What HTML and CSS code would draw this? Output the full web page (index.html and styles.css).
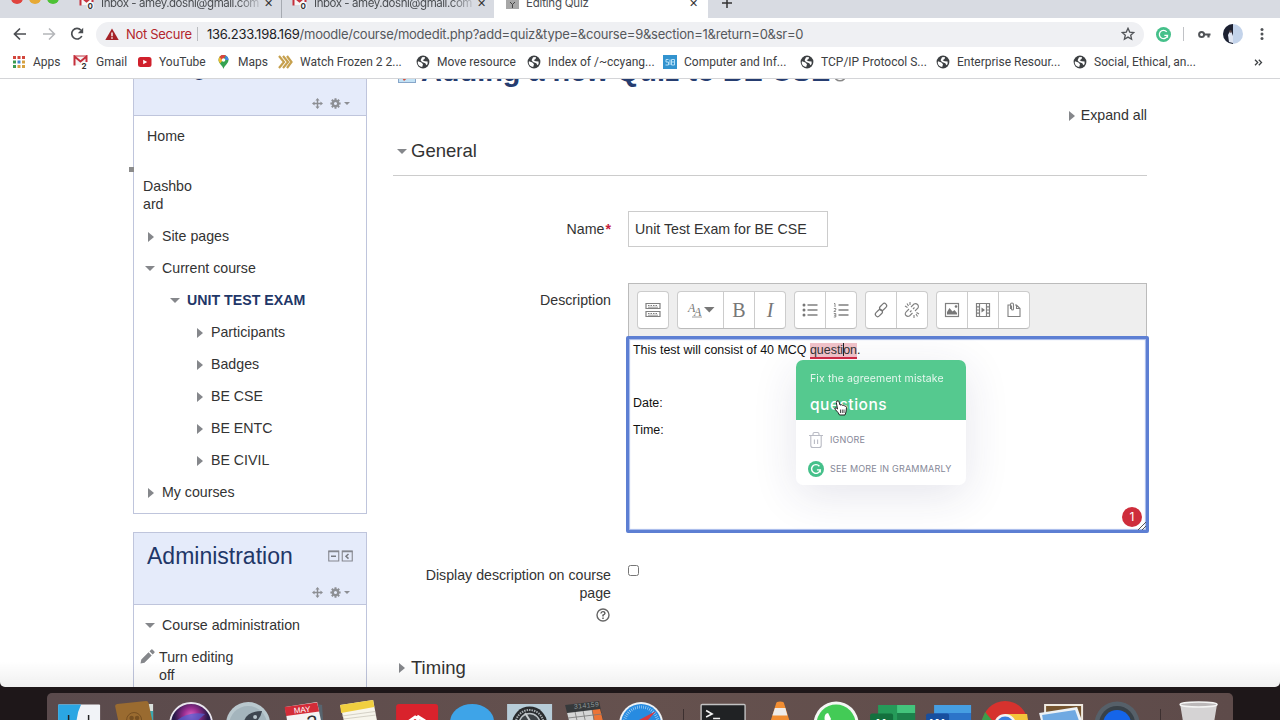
FILE: index.html
```html
<!DOCTYPE html>
<html lang="en">
<head>
  <meta charset="UTF-8">
  <title>Editing Quiz</title>
  <link rel="stylesheet" href="styles.css">
</head>
<body>
  <svg width="0" height="0" class="defs">
    <symbol id="globe" viewBox="0 0 14 14">
      <circle cx="7" cy="7" r="6.4" fill="#3d4043"/>
      <path d="M2 6.2 L5.4 7.4 L7 9.2 L6.2 12 Q2.4 11.4 1.7 8Z M6 2.2 L8.7 2 Q9.5 3.5 8.2 4.2 L6.6 5.2 L8.6 6.3 L11.6 6.4 Q12.2 8.5 10.4 10.3 L9.3 8.2 L6 6.9 L4.6 5.2Z" fill="#fff"/>
    </symbol>
    <symbol id="gmail" viewBox="0 0 16 14">
      <path d="M1 1h13v9H1z" fill="#f5f5f5"/>
      <path d="M1.500 10.500V1.500L7.500 6.500L13.500 1.500V7" fill="none" stroke="#c5303c" stroke-width="2"/>
      <path d="M1 1h13" stroke="#c5303c"/>
    </symbol>
    <symbol id="grammarly" viewBox="0 0 16 16">
      <circle cx="8" cy="8" r="8" fill="#45c08a"/>
      <path d="M11.400 5.200A4.400 4.400 0 1 0 12.300 8.900H8.900M12.200 8.800V11.500" fill="none" stroke="#fff" stroke-width="1.400"/>
    </symbol>
    <symbol id="move" viewBox="0 0 12 12">
      <path d="M6 0l2.300 2.800H6.800v2.400h2.400V3.700L12 6L9.200 8.300V6.800H6.800v2.400h1.500L6 12L3.700 9.200h1.500V6.800H2.800v1.500L0 6l2.800-2.300v1.500h2.400V2.800H3.700z" fill="#8d8f94"/>
    </symbol>
    <symbol id="gear" viewBox="0 0 12 12">
      <circle cx="6" cy="6" r="3" fill="none" stroke="#8d8f94" stroke-width="2.600"/>
      <path d="M6 .4v2M6 9.600v2M.4 6h2M9.600 6h2M2 2l1.500 1.500M8.500 8.500L10 10M2 10l1.500-1.500M8.500 3.500L10 2" stroke="#8d8f94" stroke-width="2.200"/>
    </symbol>
  </svg>

  <div class="browser">
    <div class="tabs">
      <div class="lights"><i class="red"></i><i class="yellow"></i><i class="green"></i></div>
      <div class="tab first">
        <svg width="16" height="14"><use href="#gmail"/><text x="8.500" y="13.500" class="count">0</text></svg>
        <span>Inbox - amey.doshi@gmail.com</span><b>✕</b>
      </div>
      <div class="tab second">
        <svg width="16" height="14"><use href="#gmail"/><text x="8.500" y="13.500" class="count">0</text></svg>
        <span>Inbox - amey.doshi@gmail.com</span><b>✕</b>
      </div>
      <div class="tab active">
        <svg width="14" height="14"><rect width="13" height="14" fill="#a7a7a7"/><path d="M4 7l2.500 2.500L9 7M6.500 9.500V13" stroke="#444" fill="none"/></svg>
        <span>Editing Quiz</span><b>✕</b>
      </div>
      <div class="new-tab"><svg width="12" height="12"><path d="M6 1v10M1 6h10" stroke="#333" stroke-width="1.500"/></svg></div>
    </div>

    <div class="toolbar">
      <svg class="back" width="14" height="14"><path d="M13 7H2M7 1.500L1.500 7L7 12.500" fill="none" stroke="#4b4e52" stroke-width="1.700"/></svg>
      <svg class="forward" width="14" height="14"><path d="M1 7h11M7 1.500L12.500 7L7 12.500" fill="none" stroke="#b4b6b9" stroke-width="1.500"/></svg>
      <svg class="reload" width="14" height="14"><path d="M11.800 9A5.300 5.300 0 1 1 11 3.200" fill="none" stroke="#4b4e52" stroke-width="1.700"/><path d="M13.200 .8v5.400H7.800z" fill="#4b4e52"/></svg>
      <div class="address">
        <svg width="14" height="13"><path d="M7 .5L13.700 12H.3z" fill="#a52227"/><path d="M7 4.500v3.800M7 9.200v1.500" stroke="#fff" stroke-width="1.400"/></svg>
        <span class="warn">Not Secure</span>
        <span class="url"><em>136.233.198.169</em>/moodle/course/modedit.php?add=quiz&amp;type=&amp;course=9&amp;section=1&amp;return=0&amp;sr=0</span>
        <svg class="star" width="14" height="14"><path d="M7 1.300l1.700 3.800 4.100.4-3.100 2.700.9 4L7 10.100l-3.600 2.100.9-4L1.200 5.500l4.100-.4z" fill="none" stroke="#505357" stroke-width="1.300"/></svg>
      </div>
      <svg class="ext" width="15" height="15"><use href="#grammarly"/></svg>
      <i class="divider"></i>
      <svg class="key" width="13" height="9"><circle cx="3.600" cy="4.500" r="2.500" fill="none" stroke="#505357" stroke-width="2"/><path d="M6 4.500h6.500M10.500 4.500v3" stroke="#505357" stroke-width="2.200"/></svg>
      <svg class="avatar" width="20" height="20"><circle cx="10" cy="10" r="10" fill="#c3d3ea"/><path d="M10 0A10 10 0 0 0 10 20z" fill="#1c2030"/><path d="M5 11l1.500-3h2l1.500 4v7l-4-1z" fill="#dfe5f2"/><circle cx="7.500" cy="7.500" r="1.300" fill="#604c4b"/></svg>
      <svg class="dots" width="4" height="14"><circle cx="2" cy="2.500" r="1.500"/><circle cx="2" cy="7" r="1.500"/><circle cx="2" cy="11.500" r="1.500"/></svg>
    </div>

    <div class="bookmarks">
      <div><svg width="14" height="14"><path d="M1 2.500h3M5.500 2.500h3M10 2.500h3" stroke="#d2453c" stroke-width="3"/><path d="M1 7h3M1 11.500h3" stroke="#3c9b52" stroke-width="3"/><path d="M5.500 7h3" stroke="#4285d0" stroke-width="3"/><path d="M10 7h3M5.500 11.500h3M10 11.500h3" stroke="#d6a140" stroke-width="3"/></svg><span>Apps</span></div>
      <div><svg width="16" height="14"><use href="#gmail"/><text x="8.500" y="13.500" class="count">2</text></svg><span>Gmail</span></div>
      <div><svg width="14" height="12"><rect y="1" width="13.500" height="10" rx="2.500" fill="#d0202c"/><path d="M5.200 3.700v4.600L9.200 6z" fill="#fff"/></svg><span>YouTube</span></div>
      <div class="maps"><svg width="11" height="14"><path d="M5.500 14C5 11 .5 8.500 .5 5a5 5 0 0 1 10 0C10.500 8.500 6 11 5.500 14z" fill="#35a351"/><path d="M.6 5.800A5 5 0 0 1 2 1.500L5 5 2 8.500z" fill="#f2b92e"/><path d="M1.500 1.800A5 5 0 0 1 8 .7L4 5z" fill="#d9453d"/><path d="M7.500 .5a5 5 0 0 1 3 4.500L7 5z" fill="#4584e4"/><circle cx="5.500" cy="5" r="1.800" fill="#fff"/></svg><span>Maps</span></div>
      <div><svg width="15" height="14"><path d="M1 1l5 6-5 6M5 1l5 6-5 6M9 1l4.500 6L9 13" fill="none" stroke="#c6a04d" stroke-width="2.200"/></svg><span>Watch Frozen 2 2...</span></div>
      <div><svg width="14" height="14"><use href="#globe"/></svg><span>Move resource</span></div>
      <div><svg width="14" height="14"><use href="#globe"/></svg><span>Index of /~ccyang...</span></div>
      <div><svg width="14" height="14"><rect width="14" height="14" fill="#3293cf"/><path d="M5.500 4.500H3v2.500h2.500V10H2.500M7 4.500v5.500M8.500 4.500h3V10h-3zM8.500 7h3" fill="none" stroke="#b5e0f8"/></svg><span>Computer and Inf...</span></div>
      <div><svg width="14" height="14"><use href="#globe"/></svg><span>TCP/IP Protocol S...</span></div>
      <div><svg width="14" height="14"><use href="#globe"/></svg><span>Enterprise Resour...</span></div>
      <div><svg width="14" height="14"><use href="#globe"/></svg><span>Social, Ethical, an...</span></div>
      <svg class="more" width="9" height="7"><path d="M1 .8l2.700 2.700L1 6.200M4.800 .8l2.700 2.700-2.700 2.700" fill="none" stroke="#3d4043" stroke-width="1.300"/></svg>
    </div>

    <div class="page">
      <aside>
        <section class="block">
          <header>
            <h3>Navigation</h3>
            <p class="actions"><svg width="11" height="11"><use href="#move"/></svg><svg width="11" height="11"><use href="#gear"/></svg><i class="caret"></i></p>
          </header>
          <ul class="tree">
            <li class="home">Home</li>
            <li class="dash">Dashbo<br>ard</li>
            <li class="closed">Site pages</li>
            <li class="open">Current course</li>
            <li class="open l2 current">UNIT TEST EXAM</li>
            <li class="closed l3">Participants</li>
            <li class="closed l3">Badges</li>
            <li class="closed l3">BE CSE</li>
            <li class="closed l3">BE ENTC</li>
            <li class="closed l3">BE CIVIL</li>
            <li class="closed">My courses</li>
          </ul>
        </section>
        <section class="block">
          <header>
            <div class="title-row">
              <h3>Administration</h3>
              <svg width="25" height="12"><path d="M.75 1h10v10h-10zM14.250 1h10v10h-10z" fill="none" stroke="#85888f" stroke-width="1.100"/><path d="M.5 1.500h10.500M14 1.500h10.500" stroke="#85888f" stroke-width="1.500"/><path d="M3 6.300h5M20.500 4l-2.500 2.300 2.500 2.300" fill="none" stroke="#777a80" stroke-width="1.500"/></svg>
            </div>
            <p class="actions"><svg width="11" height="11"><use href="#move"/></svg><svg width="11" height="11"><use href="#gear"/></svg><i class="caret"></i></p>
          </header>
          <ul class="tree">
            <li class="open">Course administration</li>
            <li class="edit"><svg width="15" height="15"><path d="M.5 14.500l.8-4L8.500 3.300l3.200 3.200-7.200 7.200zM9.500 2.300L11.300.6q.7-.5 1.400.1l1.700 1.700q.6.700 0 1.400L12.700 5.500z" fill="#85878b"/></svg><span>Turn editing<br>off</span></li>
          </ul>
        </section>
      </aside>

      <main>
        <h2><svg width="18" height="24"><rect x=".5" y=".5" width="17" height="23" fill="#c3e2f5" stroke="#87a6c9"/><path d="M1 14l5 8 10-9-3-3H3z" fill="#d34f3b"/></svg><span>Adding a new Quiz to BE CSE</span><svg class="help" width="14" height="14"><circle cx="7" cy="7" r="5.800" fill="none" stroke="#888" stroke-width="1.500"/></svg></h2>
        <a class="expand">Expand all</a>
        <h4 class="legend open">General</h4>
        <form>
          <div class="row name">
            <label>Name<b>*</b></label>
            <input type="text" value="Unit Test Exam for BE CSE">
          </div>
          <div class="row desc">
            <label>Description</label>
            <div class="editor">
              <div class="buttons">
                <div class="group"><span><svg width="16" height="16"><path d="M1 1.500h14v5H1zM1 9.500h14v5H1z" fill="none" stroke="#808080" stroke-width="1.200"/><path d="M3 3.500h10M3 11.500h10" stroke="#808080" stroke-dasharray="1.500 1"/><path d="M3 5.200h10M3 13.200h10" stroke="#808080" stroke-width=".8"/></svg></span></div>
                <div class="group"><span class="wide"><svg width="28" height="18"><text x="1" y="11" class="aa">A</text><text x="7" y="15" class="aa">A</text><path d="M5 16h10" stroke="#808080" stroke-width=".8"/><path d="M17 6h10.500l-5.200 5.500z" fill="#777"/></svg></span><span class="bold">B</span><span class="italic">I</span></div>
                <div class="group"><span><svg width="16" height="16"><path d="M5.500 3h10M5.500 8h10M5.500 13h10" stroke="#808080" stroke-width="1.300"/><circle cx="2" cy="3" r="1.500" fill="#777"/><circle cx="2" cy="8" r="1.500" fill="#777"/><circle cx="2" cy="13" r="1.500" fill="#777"/></svg></span><span><svg width="16" height="16"><path d="M5.500 3h10M5.500 8h10M5.500 13h10" stroke="#808080" stroke-width="1.300"/><path d="M1 1.500h1V5M.8 6.500h2v1.500l-2 1.500h2M.8 11.500h2V15h-2M1 13.200h1.800" fill="none" stroke="#808080" stroke-width=".9"/></svg></span></div>
                <div class="group"><span><svg width="16" height="16"><g fill="none" stroke="#777" stroke-width="1.200"><rect x="-1" y="-2.300" width="8" height="4.600" rx="2.300" transform="translate(8 7) rotate(-45)"/><rect x="-7" y="-2.300" width="8" height="4.600" rx="2.300" transform="translate(8 9) rotate(-45)"/></g></svg></span><span><svg width="16" height="16"><path d="M7 5l3-3q2-1 3.500.5T14 6l-3 3M5 7l-3 3q-1.500 2 0 3.500t3.500.5l3-3M6 10l1.500-1.500M9 7l1.500-1.500M1 4l2.500 1.500M3 1.500l1.500 2.500M6 0v3M15 12l-2.500-1.500M13.500 14.500L12 12M10 16v-3" fill="none" stroke="#808080" stroke-width="1.100"/></svg></span></div>
                <div class="group"><span><svg width="16" height="16"><rect x="1.500" y="1.500" width="13" height="13" fill="none" stroke="#808080" stroke-width="1.200"/><path d="M3 12.500V10l2.500-4 3 3.500L10.500 8l2.500 3v1.500z" fill="#777"/><circle cx="12" cy="4.500" r="1.300" fill="#777"/></svg></span><span><svg width="16" height="16"><path d="M1.500 1.500h13v13h-13zM4.500 1.500v13M11.500 1.500v13M1.500 4.800h3M1.500 8h3M1.500 11.200h3M11.500 4.800h3M11.500 8h3M11.500 11.200h3" fill="none" stroke="#808080" stroke-width="1.200"/><path d="M6.500 5.500v5L10 8z" fill="#777"/></svg></span><span><svg width="16" height="16"><path d="M4 3H2v11.500h12V6.500L10.500 3H9M10.500 3v3.500H14M4.500 7V2.500q0-1.500 1.500-1.500t1.500 1.500V7q0 1-1 1t-1-1V3.500" fill="none" stroke="#808080" stroke-width="1.100"/></svg></span></div>
              </div>
              <div class="content">
                <p>This test will consist of 40 MCQ <mark>questi<i class="text-caret"></i>on</mark>.</p>
                <p>&nbsp;</p>
                <p>Date:</p>
                <p>Time:</p>
                <span class="errors">1</span>
                <svg class="resize" width="8" height="8"><path d="M0 8L8 0M4 8l4-4" stroke="#555"/></svg>
              </div>
              <div class="popup">
                <div class="fix"><small>Fix the agreement mistake</small><strong>questions</strong></div>
                <div class="option"><svg width="16" height="18"><path d="M1 4.500h14M5 4.500V3q0-1.500 1.500-1.500h3Q11 1.500 11 3v1.500M2.800 5v9.500q0 2 2 2h6.400q2 0 2-2V5M6.400 8.500v4.500M9.600 8.500v4.500" fill="none" stroke="#b9bbc4" stroke-width="1.100"/></svg><span>IGNORE</span></div>
                <div class="option"><svg width="16" height="16"><use href="#grammarly"/></svg><span>SEE MORE IN GRAMMARLY</span></div>
                <svg class="hand" width="13" height="16" viewBox="0 0 13 16"><path d="M3 1q1.500-.8 2 .8L6 5l1.500-.3.8.6 1.500-.1.700.8 1.300.2.700 1.300L12 12l-1 3H5.500L4 12.500 .8 9q-.2-1.500 1.500-1l1.200 1L2.300 2.500z" fill="#fff" stroke="#222"/><path d="M6.500 9.500v3.500M8.300 9.500v3.500M10 9.500v3.500" stroke="#222" stroke-width=".8"/></svg>
              </div>
            </div>
          </div>
          <div class="row show">
            <label>Display description on course page<br><svg width="14" height="14"><circle cx="7" cy="7" r="6" fill="none" stroke="#666" stroke-width="1.400"/><path d="M4.900 5.500q.2-1.900 2.100-1.900t2 1.600Q9 6.200 7 7.200v1.200M7 9.400v1.600" fill="none" stroke="#555" stroke-width="1.400"/></svg></label>
            <input type="checkbox">
          </div>
        </form>
        <h4 class="legend closed">Timing</h4>
      </main>
    </div>
  </div>

  <div class="dock">
    <svg viewBox="0 0 56 27"><rect x="7" y="11.500" width="42" height="20" rx="1" fill="#f1f3f7"/><path d="M7 11.500h23q-4 8-4.500 16H7z" fill="#2ba6e3"/><path d="M17.500 22v6M37.500 22v6" stroke="#222" stroke-width="1.500"/></svg>
    <svg viewBox="0 0 56 27"><path d="M36 11h10v17H36z" fill="#d9e0dc"/><path d="M42 18h4v10h-4z" fill="#3ca9b2"/><path d="M8 13q0-1.500 2-2l29-3q2 0 2.500 2L45 27H11z" fill="#9a6b30"/><circle cx="27" cy="27" r="7.500" fill="none" stroke="#775022"/><circle cx="24.500" cy="25" r="2.200" fill="#775022"/><circle cx="30" cy="25" r="2.200" fill="#775022"/></svg>
    <svg viewBox="0 0 56 27"><defs><radialGradient id="siri" cx=".5" cy=".3"><stop offset="0" stop-color="#e264c4"/><stop offset=".35" stop-color="#9a2e91"/><stop offset=".8" stop-color="#28184a"/></radialGradient></defs><circle cx="28" cy="31" r="21" fill="url(#siri)" stroke="#e9e6ee" stroke-width="1.800"/><path d="M13 28q12-10 29-7l-8 7z" fill="#4b62d1" opacity=".7"/></svg>
    <svg viewBox="0 0 56 27"><circle cx="28" cy="31" r="22" fill="#b9c8ce"/><circle cx="28" cy="32" r="19" fill="#a4b5bd"/><path d="M24 28q3-10 18-10q-1 5-5 10z" fill="#3d4650"/><circle cx="35" cy="24" r="2" fill="#b8c5cc"/></svg>
    <svg viewBox="0 0 56 27"><path d="M40 11l6 1 1 16h-5z" fill="#58656f"/><path d="M9 14l32-5 4 19H11z" fill="#f4f3f3"/><path d="M8.500 14L41 9.500l2 9L10 23z" fill="#d32c38"/><text x="18" y="20.500" class="may" transform="rotate(-7 19 20)">MAY</text><text x="31" y="37" class="day" transform="rotate(-7 31 34)">2</text></svg>
    <svg viewBox="0 0 56 27"><path d="M8 12l33-5 4 21H12z" fill="#f7f5ec"/><path d="M8 12l33-5 1.200 7L9 20z" fill="#f0cf40"/><path d="M10 23l33-4.500M11 26l33-4" stroke="#cbc8bd" stroke-width=".8"/></svg>
    <svg viewBox="0 0 56 27"><rect x="8" y="11" width="42" height="20" rx="3" fill="#d9222c"/><path d="M20 29l7-5 4 3M29 23l8 5" fill="none" stroke="#fff" stroke-width="3"/></svg>
    <svg viewBox="0 0 56 27"><ellipse cx="28" cy="29" rx="22" ry="18" fill="#3ea4e8"/></svg>
    <svg viewBox="0 0 56 27"><rect x="6" y="11" width="45" height="20" fill="#b7ccd8"/><circle cx="28.500" cy="31" r="17.500" fill="#282b2e"/><circle cx="28.500" cy="31" r="14" fill="none" stroke="#a7adb1" stroke-width="2" stroke-dasharray="1.500 1"/><circle cx="28.500" cy="31" r="10.500" fill="#3e4347" stroke="#bbc1c5" stroke-width="1.500"/><path d="M24 20l5 8" stroke="#c6cbce" stroke-width="2"/></svg>
    <svg viewBox="0 0 56 27"><path d="M8 12l34-4 4 20H12z" fill="#36393b"/><text x="17" y="16" class="calc" transform="rotate(-6 17 16)">314159</text><path d="M10 20l25-3 2 11H12z" fill="#d5d6d6"/><path d="M35 17l8-1 3 12h-9z" fill="#eb7437"/><path d="M18 19l2 9M26 18l2 9M11 25l34-4M35 17l2 10" stroke="#777" stroke-width=".8"/></svg>
    <svg viewBox="0 0 56 27"><circle cx="28" cy="31" r="22" fill="#eef2f5"/><circle cx="28" cy="31" r="20" fill="#278be1"/><circle cx="28" cy="31" r="17" fill="none" stroke="#b9dcf8" stroke-width="3" stroke-dasharray=".6 1.500"/><path d="M43 18L24 28h10z" fill="#d73b42"/></svg>
    <i></i>
    <svg viewBox="0 0 56 27"><rect x="5" y="11.500" width="44" height="20" rx="1" fill="#202224" stroke="#c2c2c2" stroke-width="1.400"/><path d="M10 17.500l6 3.500-6 3M17 25.500h7" fill="none" stroke="#f3f3f3" stroke-width="1.600"/></svg>
    <svg viewBox="0 0 56 27"><path d="M24 10.500q0-2 4-2t4 2L37.500 28h-19z" fill="#f18e33"/><path d="M22.800 15h10.500l2 7.500h-15z" fill="#eeecea"/></svg>
    <svg viewBox="0 0 56 27"><circle cx="28" cy="31" r="22.500" fill="#f4f6f4"/><circle cx="28" cy="31" r="19.500" fill="#43cb56"/><path d="M17 29q-2-8 3-9l3 6-2 3z" fill="#fff"/></svg>
    <svg viewBox="0 0 56 27"><path d="M13 12h37v16H13z" fill="#259b59"/><path d="M32 12h18v8H32z" fill="#43c47c"/><path d="M32 20h18v8H32z" fill="#1c814b"/><rect x="5" y="20.500" width="23" height="10" rx="2" fill="#13713e"/><text x="11" y="36" class="office">X</text></svg>
    <svg viewBox="0 0 56 27"><path d="M13 12h37v8H13z" fill="#469ee2"/><path d="M13 20h37v8H13z" fill="#2c74c9"/><rect x="5" y="20.500" width="23" height="10" rx="2" fill="#184f9f"/><text x="9" y="36" class="office">W</text></svg>
    <svg viewBox="0 0 56 27"><circle cx="28" cy="31" r="23" fill="#d6322e"/><path d="M28 21h22l1 7H28z" fill="#f4c53b"/><path d="M8 19l10 12H3z" fill="#3b9e4a"/><circle cx="28" cy="32" r="11" fill="#f2f4f6"/><circle cx="28" cy="32" r="8.500" fill="#3b80df"/></svg>
    <svg viewBox="0 0 56 27"><path d="M11 11h39v20H11z" fill="#eee9e1"/><path d="M13 13h35v15H13z" fill="#76552f"/><path d="M6 20l38-6 5 14H8z" fill="#edf2f6"/><path d="M9 22l33-5 4 11H10z" fill="#6fa9e2"/></svg>
    <svg viewBox="0 0 56 27"><circle cx="28" cy="31" r="22.500" fill="#566069"/><circle cx="28" cy="31" r="18" fill="#384148"/><circle cx="28" cy="31" r="14" fill="#1565e9"/></svg>
    <i></i>
    <svg viewBox="0 0 56 27"><path d="M7 11h37l-3 18H10z" fill="#d5d3d4"/><ellipse cx="25.500" cy="11.500" rx="18.500" ry="2.500" fill="#bcb8b9" stroke="#f4f4f4" stroke-width="1.500"/></svg>
  </div>
</body>
</html>
```
FILE: styles.css
```css
* { box-sizing: border-box; }
body { margin: 0; width: 1280px; height: 720px; overflow: hidden; background: #1e1719; font-family: "Liberation Sans", Arial, sans-serif; font-size: 14.2px; line-height: 18px; color: #333; }
svg { display: block; flex: none; }
h2, h3, h4, p, ul { margin: 0; padding: 0; font-weight: normal; }
.defs { position: absolute; }
.browser { height: 687px; display: flex; flex-direction: column; background: #fff; border-radius: 0 0 5px 5px; overflow: hidden; }

/* browser tabs */
.tabs { height: 18px; flex: none; display: flex; background: #d8dbe2; overflow: hidden; font: 11.5px/14px Inter, sans-serif; color: #4b4e52; }
.lights { width: 66px; padding-left: 11px; display: flex; gap: 6px; margin-top: -8px; }
.lights i { width: 12px; height: 12px; border-radius: 50%; }
.red { background: #e0443e; }
.yellow { background: #e6a935; }
.green { background: #4dc235; }
.tab { display: flex; align-items: flex-start; height: 18px; padding-left: 13px; }
.tab svg { margin-top: -5px; }
.tab span { margin: -4px 0 0 6px; white-space: nowrap; overflow: hidden; }
.tab b { font-weight: normal; font-size: 11px; margin: -4px 0 0 auto; color: #333; }
.first { width: 216px; border-right: 1px solid #a6aab1; }
.second { width: 212px; padding-left: 10px; }
.first span, .second span { width: 158px; letter-spacing: -.45px; -webkit-mask-image: linear-gradient(to right, #000 86%, rgba(0,0,0,.2)); }
.first b { margin-right: 8px; }
.second b { margin-right: 8px; }
.active { width: 214px; background: #fff; padding-left: 12px; }
.active span { letter-spacing: -.2px; }
.active b { margin-right: 10px; }
.new-tab { padding: 0 13px; margin-top: -3px; }
.count { font: bold 8px Inter, sans-serif; fill: #333; stroke: #fff; stroke-width: 2px; paint-order: stroke; }

/* address row */
.toolbar { height: 32px; flex: none; display: flex; align-items: center; padding-left: 13px; font: 13px/18px Inter, sans-serif; }
.forward { margin-left: 15px; }
.reload { margin-left: 14px; }
.address { flex: none; width: 1048px; height: 25px; margin: 0 0 0 12px; background: #eff0f3; border-radius: 13px; display: flex; align-items: center; padding: 0 9px; }
.warn { width: 72px; margin-left: 7px; color: #b3262c; border-right: 1px solid #b9bbbf; line-height: 14px; letter-spacing: -.3px; white-space: nowrap; }
.url { margin-left: 9px; color: #55585c; letter-spacing: -.24px; }
.url em { font-style: normal; color: #202124; }
.star { margin-left: auto; }
.ext { margin-left: 12px; }
.divider { width: 1px; height: 14px; margin: 0 14px 0 12px; background: #c0c2c6; }
.avatar { margin-left: 12px; }
.dots { margin-left: 17px; fill: #505357; }

/* bookmarks bar */
.bookmarks { height: 29px; flex: none; display: grid; grid-template-columns: 61px 65px 80px 60px 138px 111px 136px 137px 136px 137px 181px 10px; align-items: center; padding: 0 0 4px 12px; border-bottom: 1px solid #d4d5d8; font: 12px/16px Roboto, sans-serif; color: #3d4043; white-space: nowrap; }
.bookmarks div { display: flex; align-items: center; gap: 7px; }
.bookmarks .maps { gap: 9px; }

/* moodle page */
.page { position: relative; flex: 1; min-height: 0; overflow: hidden; display: flex; padding-left: 133px; }
.page::after { content: ""; position: absolute; left: 0; right: 0; bottom: 0; height: 26px; background: linear-gradient(transparent, rgba(0,0,0,.06)); }
aside { width: 234px; margin-top: -36px; flex: none; }
.block { border: 1px solid #bfc5dc; margin-bottom: 18px; }
.block header { height: 72px; background: #e5ebfa; border-bottom: 1px solid #bfc5dc; padding: 9px 13px; }
h3 { font-size: 23px; line-height: 29px; color: #1f3768; }
.title-row { display: flex; justify-content: space-between; align-items: center; }
.title-row svg { margin-top: -2px; }
.actions { display: flex; align-items: center; justify-content: flex-end; gap: 7px; margin: 16px 3px 0 0; }
.caret { border: 3px solid transparent; border-top-color: #8d8f94; border-bottom: 0; margin-left: -4px; }
.tree { list-style: none; padding: 4px 0 5px; }
.tree li { height: 32px; padding: 7px 0 7px 28px; position: relative; }
.tree .home { padding-left: 13px; }
.tree .dash { height: 36px; margin: 25px 0 7px; padding: 0 0 0 9px; }
.dash::before { content: ""; position: absolute; left: -5px; top: -10px; width: 5px; height: 5px; background: #8c8c8c; }
.tree .l2 { padding-left: 53px; }
.tree .l3 { padding-left: 77px; }
.current { font-weight: bold; color: #1f3768; }
.tree .closed::before, .tree .open::before, .legend::before, .expand::before { content: ""; display: inline-block; border: 5px solid transparent; }
.tree .closed::before { border-width: 5px 0 5px 6px; border-left-color: #85878b; margin: 0 8px 0 -14px; vertical-align: -1px; }
.tree .open::before { border-width: 5px 5px 0; border-top-color: #85878b; margin: 0 7px 0 -17px; vertical-align: 2px; }
.tree .edit { display: flex; gap: 4px; padding-left: 6px; height: 46px; }
.edit svg { margin-top: 1px; }

main { width: 754px; margin-left: 26px; }
h2 { display: flex; align-items: center; height: 34px; margin-top: -25px; padding-left: 5px; font-size: 28.9px; font-weight: bold; color: #263d70; white-space: nowrap; }
h2 span { margin: 0 3px 0 5px; }
.help { margin-top: 8px; }
.expand { display: block; text-align: right; margin-top: 18px; }
.expand::before { border-width: 5px 0 5px 6px; border-left-color: #85878b; margin-right: 6px; vertical-align: -1px; }
.legend { font-size: 18.5px; line-height: 24px; padding-left: 4px; }
.legend.open { height: 37px; margin-top: 15px; border-bottom: 1px solid #ccc; }
.legend.open::before { border-width: 5px 5px 0; border-top-color: #85878b; margin-right: 4px; vertical-align: 3px; }
.legend.closed::before { border-width: 5px 0 5px 6px; border-left-color: #85878b; margin: 0 6px 0 2px; vertical-align: 1px; }
.row { display: grid; grid-template-columns: 218px 1fr; column-gap: 17px; }
label { text-align: right; }
label b { margin-left: 1px; color: #c5203e; }
.name { margin-top: 35px; height: 72px; }
.name label { padding-top: 9px; }
input[type="text"] { width: 200px; height: 36px; border: 1px solid #ccc; padding: 0 6px; font: inherit; color: #333; }
.desc { height: 250px; }
.desc label { padding-top: 8px; }
.editor { position: relative; width: 519px; }
.buttons { display: flex; gap: 8px; height: 53px; padding: 7px 8px; background: #eee; border: 1px solid #bbb; border-bottom: 0; }
.group { display: flex; height: 38px; border: 1px solid #ccc; border-bottom-color: #bbb; border-radius: 4px; background: #fff; }
.group span { width: 31px; display: flex; align-items: center; justify-content: center; border-left: 1px solid #ccc; }
.group span:first-child { border-left: 0; width: 30px; }
.group .wide:first-child { width: 45px; }
.group .bold, .group .italic { font: 20px "Liberation Serif", serif; color: #777; }
.group .italic { font-style: italic; }
.aa { font: italic 12px "Liberation Serif", serif; fill: #777; }
.content { position: relative; height: 197px; margin: 0 -2px 0 -2px; padding: 3px 4px; border: 3px solid #5d7fd3; border-radius: 2px; box-shadow: inset 0 0 1px 1px #a4b7ea; font-size: 12.44px; line-height: 17px; color: #111; }
.content p { margin-bottom: 9.7px; }
mark { background: #f2c4ca; border-bottom: 2px solid #d12b45; color: #333; }
.text-caret { display: inline-block; width: 1px; height: 13px; margin-right: -1px; background: #222; vertical-align: -2px; }
.errors { position: absolute; right: 4px; bottom: 3px; width: 20px; height: 20px; border-radius: 50%; background: #ce2d3b; color: #fff; font: 12px/20px Inter, sans-serif; text-align: center; }
.resize { position: absolute; right: 0; bottom: 0; }

/* suggestion card */
.popup { position: absolute; left: 168px; top: 77px; width: 170px; height: 125px; border-radius: 7px; background: #fff; box-shadow: 0 10px 45px rgba(40,40,100,.12); font-family: Inter, sans-serif; }
.fix { height: 60px; padding: 11px 14px; background: #55c98f; border-radius: 7px 7px 0 0; color: #fff; }
.fix small { display: block; font-size: 10.5px; line-height: 16px; letter-spacing: .12px; white-space: nowrap; opacity: .85; }
.fix strong { display: block; font-size: 15.5px; line-height: 20px; margin-top: 8px; font-weight: 500; letter-spacing: .5px; }
.option { display: flex; align-items: center; gap: 6px; height: 29px; padding-left: 12px; font-size: 9px; color: #858898; letter-spacing: .2px; white-space: nowrap; }
.fix + .option { margin-top: 5px; }
.hand { position: absolute; left: 38px; top: 40px; }
.show { margin-top: 33px; height: 90px; }
.show label { padding: 0 0 0 20px; }
.show svg { margin: 6px 1px 0 auto; }
input[type="checkbox"] { width: 11px; height: 11px; margin: -1px 0 0; }

/* dock */
.dock { display: flex; width: 1186px; height: 27px; margin: 6px 0 0 47px; padding-left: 4px; border-radius: 5px 5px 0 0; background: linear-gradient(90deg, #5a4a4c, #65514e 50%, #5e4b4a); overflow: hidden; }
.dock svg { width: 56.2px; height: 27px; }
.dock i { width: 1px; height: 12px; margin: 16px 12px 0 14px; background: #3d3030; }
.may { font: 8px "Liberation Sans", sans-serif; fill: #fff; }
.day { font: 20px "Liberation Sans", sans-serif; fill: #333; }
.calc { font: 7px "Liberation Mono", monospace; fill: #8e9798; }
.office { font: bold 15px "Liberation Sans", sans-serif; fill: #fff; }
```
